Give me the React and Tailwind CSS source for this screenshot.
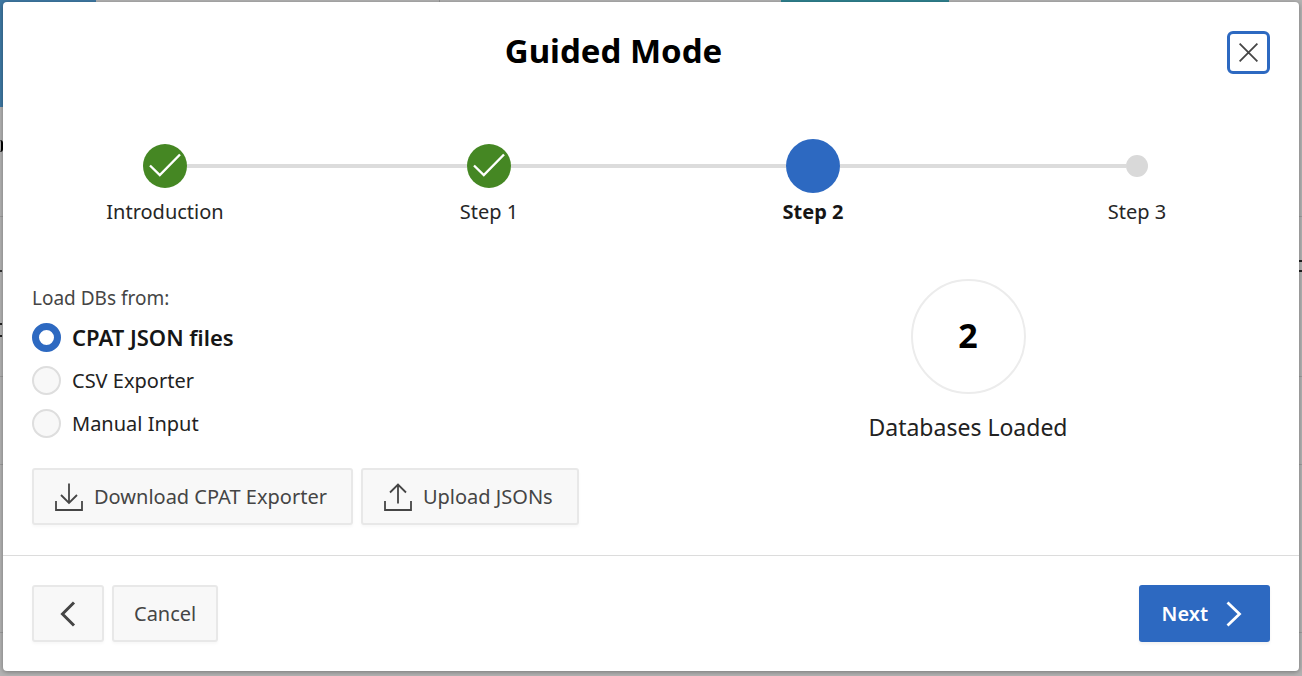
import { useState } from "react";

const steps = [
  { label: "Introduction", state: "done" },
  { label: "Step 1", state: "done" },
  { label: "Step 2", state: "current" },
  { label: "Step 3", state: "upcoming" },
];

const sources = ["CPAT JSON files", "CSV Exporter", "Manual Input"];

const plainButton =
  "flex h-[57px] items-center justify-center rounded-[3px] border-2 border-[#e8e8e8] bg-[#f8f8f8] text-xl leading-7 text-[#454545] shadow-[0_2px_3px_rgba(0,0,0,0.03)]";

function PageBehind() {
  return (
    <div aria-hidden="true" className="absolute inset-0 overflow-hidden bg-[#b3b3b3]">
      <div className="flex h-[107px]">
        <div className="w-24 bg-[#3f79a4]" />
        <div className="w-[344px] border-r border-[#969696]" />
        <div className="w-[341px]" />
        <div className="w-[168px] bg-[#2f828f]" />
      </div>
      <div className="h-[110px] border-b border-[#9d9d9d]" />
      <div className="h-40 border-b border-[#9d9d9d]" />
      <div className="h-[88px] border-b border-[#9d9d9d]" />
      <div className="h-[168px] border-b border-[#9d9d9d]" />
      <div className="absolute top-[140px] left-0 h-3 w-[3px] rounded-r-full border-r-2 border-black" />
      <div className="absolute top-[270px] left-0 h-[2px] w-[2px] bg-[#333]" />
      <div className="absolute top-[323px] left-0 h-[14px] w-[2px] border-y-2 border-[#222]" />
      <div className="absolute top-[260px] right-0 h-[12px] w-[3px] border-y-2 border-[#222]" />
    </div>
  );
}

function Marker({ state }) {
  if (state === "done") {
    return (
      <span className="flex size-11 items-center justify-center rounded-full bg-[#458723]">
        <svg viewBox="0 0 44 44" className="size-11" fill="none" stroke="#fff" strokeWidth="2.4">
          <path d="M7 21.5 L16.8 31 L37 10.5" />
        </svg>
      </span>
    );
  }
  if (state === "current") return <span className="size-[54px] rounded-full bg-[#2d69c1]" />;
  return <span className="size-[22px] rounded-full bg-[#d9d9d9]" />;
}

function Stepper() {
  return (
    <ol className="mt-[65px] grid grid-cols-4">
      {steps.map((step, i) => (
        <li
          key={step.label}
          aria-current={step.state === "current" ? "step" : undefined}
          className="flex flex-col items-center"
        >
          <div className="flex h-[54px] w-full items-center">
            <span className={i === 0 ? "flex-1" : "h-1 flex-1 bg-[#dcdcdc]"} />
            <Marker state={step.state} />
            <span className={i === steps.length - 1 ? "flex-1" : "h-1 flex-1 bg-[#dcdcdc]"} />
          </div>
          <span
            className={
              step.state === "current"
                ? "mt-[5px] text-xl leading-7 font-bold text-[#161616]"
                : "mt-[5px] text-xl leading-7 text-[#262626]"
            }
          >
            {step.label}
          </span>
        </li>
      ))}
    </ol>
  );
}

function SourcePicker() {
  const [source, setSource] = useState(sources[0]);
  return (
    <fieldset>
      <legend className="text-[19px] leading-7 text-[#454545]">Load DBs from:</legend>
      <div className="flex flex-col pt-1">
        {sources.map((name) => (
          <label
            key={name}
            className="flex h-[43px] items-center gap-[11px] self-start text-xl text-[#222] has-checked:text-[22px] has-checked:font-semibold has-checked:text-[#161616]"
          >
            <input
              type="radio"
              name="source"
              checked={source === name}
              onChange={() => setSource(name)}
              className="size-[29px] appearance-none rounded-full border-2 border-[#dedede] bg-[#f8f8f8] checked:border-[7px] checked:border-[#2d69c1] checked:bg-white"
            />
            {name}
          </label>
        ))}
      </div>
    </fieldset>
  );
}

export default function App() {
  return (
    <div className="relative flex min-h-screen flex-col px-[3px] pt-[2px] pb-[5px] font-['Noto_Sans',sans-serif]">
      <PageBehind />
      <div
        role="dialog"
        aria-labelledby="dialog-title"
        className="relative flex flex-1 flex-col rounded-[4px] bg-white shadow-[0_1px_5px_rgba(0,0,0,0.35)]"
      >
        <header className="flex items-start gap-8 px-[29px] pt-7">
          <h1 id="dialog-title" className="flex-1 text-center text-[33px] leading-[42px] font-bold text-black">
            Guided Mode
          </h1>
          <button
            type="button"
            aria-label="Close"
            className="mt-px flex size-[43px] items-center justify-center rounded-[6px] border-[3px] border-[#2d69c1] bg-white"
          >
            <svg viewBox="0 0 19 19" className="size-[19px]" fill="none" stroke="#454545" strokeWidth="1.8">
              <path d="M0.6 0.6 L18.4 18.4 M18.4 0.6 L0.6 18.4" />
            </svg>
          </button>
        </header>

        <Stepper />

        <main className="grid grid-cols-2 gap-[30px] px-[29px] pt-[53px] pb-7">
          <section className="pt-[5px]">
            <SourcePicker />
            <div className="mt-[23px] flex gap-2">
              <button type="button" className={`${plainButton} gap-[11px] pr-6 pl-[21px]`}>
                <svg viewBox="0 0 28 28" className="size-7" fill="none" stroke="#454545" strokeWidth="1.8">
                  <path d="M1 18 V27 H27 V18 M14 0.5 V20 M6 12 L14 20 L22 12" />
                </svg>
                Download CPAT Exporter
              </button>
              <button type="button" className={`${plainButton} gap-[11px] pr-6 pl-[21px]`}>
                <svg viewBox="0 0 28 28" className="size-7" fill="none" stroke="#454545" strokeWidth="1.8">
                  <path d="M1 18 V27 H27 V18 M14 20.5 V1.5 M6 9.5 L14 1.5 L22 9.5" />
                </svg>
                Upload JSONs
              </button>
            </div>
          </section>
          <section className="flex flex-col items-center">
            <div className="flex size-[115px] items-center justify-center rounded-full border-2 border-[#ececec] pb-1 text-[34px] leading-10 font-bold text-black">
              2
            </div>
            <p className="mt-[17px] text-[23px] leading-8 text-[#222]">Databases Loaded</p>
          </section>
        </main>

        <footer className="mt-auto flex items-center gap-2 border-t border-[#dcdcdc] px-[29px] py-[29px]">
          <button type="button" aria-label="Back" className={`${plainButton} w-[72px]`}>
            <svg viewBox="0 0 16 26" className="h-[26px] w-4" fill="none" stroke="#454545" strokeWidth="3">
              <path d="M14 1.5 L2.5 13 L14 24.5" />
            </svg>
          </button>
          <button type="button" className={`${plainButton} px-5`}>
            Cancel
          </button>
          <button
            type="button"
            className="ml-auto flex h-[57px] items-center gap-[18px] rounded-[3px] bg-[#2d69c1] pr-7 pl-[23px] text-xl font-semibold text-white shadow-[0_2px_3px_rgba(0,0,0,0.06)]"
          >
            Next
            <svg viewBox="0 0 16 26" className="h-[26px] w-4" fill="none" stroke="#fff" strokeWidth="2.8">
              <path d="M1.5 1.5 L13.5 13 L1.5 24.5" />
            </svg>
          </button>
        </footer>
      </div>
    </div>
  );
}
